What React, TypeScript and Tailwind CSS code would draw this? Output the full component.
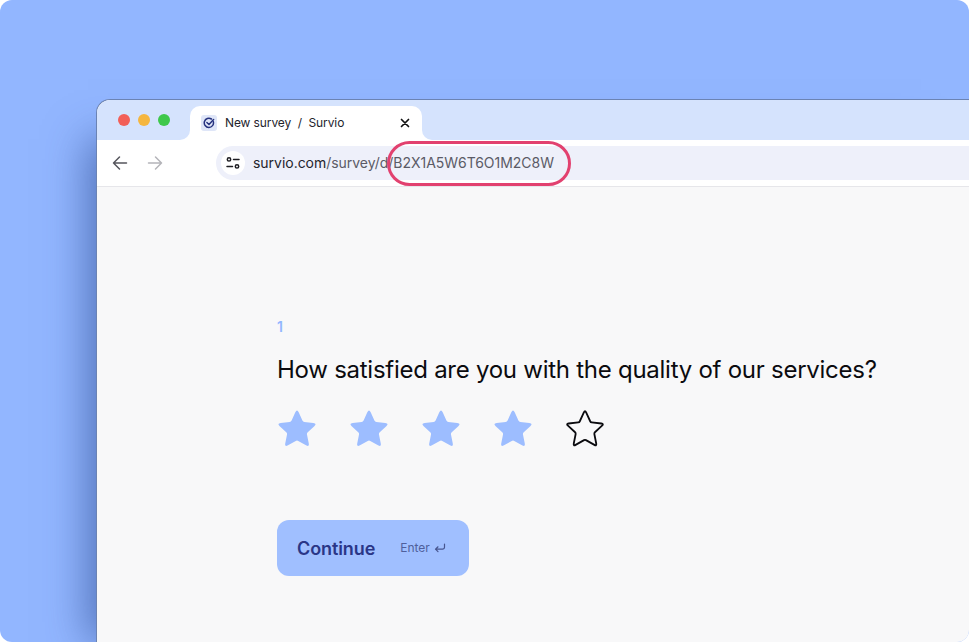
import React from "react";

function starPath(cx: number, cy: number, R: number, r: number, tOuter: number, tInner: number) {
  const pts: [number, number][] = [];
  for (let i = 0; i < 10; i++) {
    const a = (-90 + i * 36) * (Math.PI / 180);
    const rad = i % 2 === 0 ? R : r;
    pts.push([cx + rad * Math.cos(a), cy + rad * Math.sin(a)]);
  }
  let d = "";
  pts.forEach((v, i) => {
    const p = pts[(i + 9) % 10];
    const n = pts[(i + 1) % 10];
    const t = i % 2 === 0 ? tOuter : tInner;
    const a = [v[0] + (p[0] - v[0]) * t, v[1] + (p[1] - v[1]) * t];
    const b = [v[0] + (n[0] - v[0]) * t, v[1] + (n[1] - v[1]) * t];
    d += `${i === 0 ? "M" : "L"}${a[0].toFixed(2)} ${a[1].toFixed(2)} Q${v[0].toFixed(2)} ${v[1].toFixed(2)} ${b[0].toFixed(2)} ${b[1].toFixed(2)} `;
  });
  return d + "Z";
}

const FILLED = starPath(20, 21, 21.3, 10.2, 0.28, 0.1);
const OUTLINE = starPath(20, 21, 20, 9.6, 0.2, 0.08);

function Star({ filled }: { filled: boolean }) {
  return (
    <svg width="40" height="40" viewBox="0 0 40 40" className="block">
      <path
        d={filled ? FILLED : OUTLINE}
        fill={filled ? "#9dbdff" : "none"}
        stroke={filled ? "none" : "#0b0b0f"}
        strokeWidth={filled ? 0 : 1.8}
        strokeLinejoin="round"
      />
    </svg>
  );
}

export default function App() {
  return (
    <div className="w-[969px] h-[642px] bg-white overflow-hidden font-['Inter',sans-serif]">
      <div className="w-full h-full bg-[#92b6ff] rounded-[12px] overflow-hidden pt-[99px] pl-[96px]">
        <div className="relative w-[873px] h-[543px] flex flex-col bg-[#f8f8f9] rounded-tl-[14px] border-t border-l border-[#6b83b3] shadow-[-28px_20px_40px_-20px_rgba(40,70,140,0.6)]">
          {/* Tab strip */}
          <div className="h-[40px] shrink-0 bg-[#d5e3fd] rounded-tl-[14px] flex items-start">
            <div className="flex gap-2 pl-[21px] pt-[14px]">
              <span className="w-3 h-3 rounded-full bg-[#f25f58]" />
              <span className="w-3 h-3 rounded-full bg-[#f5b63f]" />
              <span className="w-3 h-3 rounded-full bg-[#3ec84b]" />
            </div>
            <div className="relative ml-[20px] mt-[6px] w-[232px] h-[34px] bg-white rounded-t-[10px] flex items-center pl-[11px] pr-[11px]">
              <span className="absolute -left-[10px] bottom-0 w-[10px] h-[10px] bg-white">
                <span className="block w-full h-full bg-[#d5e3fd] rounded-br-[10px]" />
              </span>
              <span className="absolute -right-[10px] bottom-0 w-[10px] h-[10px] bg-white">
                <span className="block w-full h-full bg-[#d5e3fd] rounded-bl-[10px]" />
              </span>
              <span className="w-[16px] h-[16px] rounded-[3px] bg-[#dfe6f8] flex items-center justify-center">
                <svg width="12" height="12" viewBox="0 0 12 12" fill="none" stroke="#27337f" strokeWidth="1.5" strokeLinecap="round" strokeLinejoin="round">
                  <path d="M10.3 4.6A4.6 4.6 0 1 1 8.4 2" />
                  <path d="M3.9 5.5 6 7.5 10.6 2.6" />
                </svg>
              </span>
              <span className="ml-[8px] text-[12px] leading-4 text-[#24242c] whitespace-pre tracking-[-0.1px]">New survey  /  Survio</span>
              <svg className="ml-auto mr-[1px]" width="10" height="10" viewBox="0 0 10 10" fill="none" stroke="#111" strokeWidth="1.7" strokeLinecap="round">
                <path d="M1.5 1.5 8.5 8.5M8.5 1.5 1.5 8.5" />
              </svg>
            </div>
          </div>
          {/* Toolbar */}
          <div className="h-[47px] shrink-0 bg-white border-b border-[#e6e6ea] flex items-center pb-[1px]">
            <svg className="ml-[15px]" width="16" height="16" viewBox="0 0 16 16" fill="none" stroke="#55555c" strokeWidth="1.5" strokeLinecap="round" strokeLinejoin="round">
              <path d="M14.5 8H1.5M7.5 2 1.5 8l6 6" />
            </svg>
            <svg className="ml-[19px]" width="16" height="16" viewBox="0 0 16 16" fill="none" stroke="#b4b4b9" strokeWidth="1.5" strokeLinecap="round" strokeLinejoin="round">
              <path d="M1.5 8h13M8.5 2l6 6-6 6" />
            </svg>
            <div className="ml-[53px] flex-1 h-[34px] bg-[#eef0fa] rounded-l-full flex items-center pl-[5px]">
              <span className="w-[24px] h-[24px] rounded-full bg-white flex items-center justify-center">
                <svg width="14" height="14" viewBox="0 0 14 14" fill="none" stroke="#1d1d22" strokeWidth="1.5" strokeLinecap="round">
                  <circle cx="3" cy="3.4" r="1.7" />
                  <path d="M7.5 3.4H13M1 10.4H6.5" />
                  <circle cx="11" cy="10.4" r="1.7" />
                </svg>
              </span>
              <span className="ml-[8px] text-[14px] leading-5 text-[#5b5b66] whitespace-nowrap tracking-[-0.03px]">
                <span className="text-[#24242c]">survio.com</span>/survey/d/B2X1A5W6T6O1M2C8W
              </span>
            </div>
          </div>
          {/* Highlight ellipse */}
          <div className="absolute left-[290px] top-[41px] w-[184px] h-[45px] rounded-full border-[3px] border-[#e2416f]" />
          {/* Survey */}
          <div className="flex-1 flex flex-col items-start pl-[180px] pt-[130px]">
            <div className="text-[14px] leading-5 font-semibold text-[#92b6ff]">1</div>
            <h1 className="mt-[17px] text-[24px] leading-8 font-normal text-[#0b0b0f] whitespace-nowrap tracking-[-0.26px]">
              How satisfied are you with the quality of our services?
            </h1>
            <div className="mt-[23px] flex gap-[32px]">
              <Star filled />
              <Star filled />
              <Star filled />
              <Star filled />
              <Star filled={false} />
            </div>
            <button className="mt-[71px] w-[192px] h-[56px] rounded-[12px] bg-[#a0bfff] flex items-center pl-[20px]">
              <span className="text-[18px] font-semibold text-[#2a3687] tracking-[-0.1px]">Continue</span>
              <span className="ml-[25px] text-[12px] text-[#4f5f9c]">Enter</span>
              <svg className="ml-[4px]" width="12" height="12" viewBox="0 0 12 12" fill="none" stroke="#47558f" strokeWidth="1.2" strokeLinecap="round" strokeLinejoin="round">
                <path d="M10.5 2v3.2a2 2 0 0 1-2 2H1.5M4 4.8 1.5 7.2 4 9.7" />
              </svg>
            </button>
          </div>
        </div>
      </div>
    </div>
  );
}
